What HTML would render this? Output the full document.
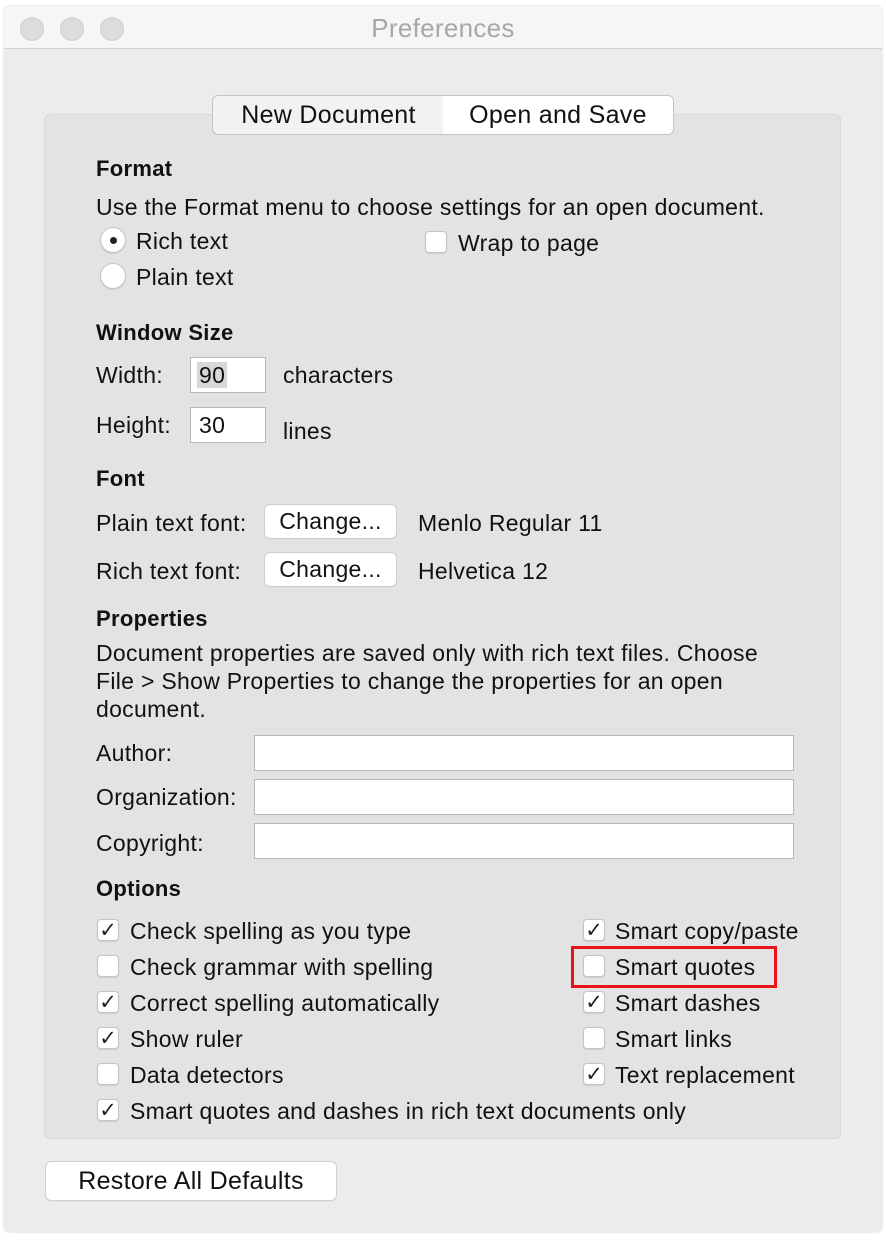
<!DOCTYPE html>
<html><head><meta charset="utf-8"><style>
*{box-sizing:border-box;margin:0;padding:0}
body{width:886px;height:1240px;background:#fff;font-family:"Liberation Sans",sans-serif;font-size:23px;letter-spacing:0.3px;color:#111;position:relative;overflow:hidden}
.win{position:absolute;left:4px;top:6px;width:878px;height:1226px;background:#ececec;border-radius:6px;box-shadow:0 0 2px #ccc}
.tb{position:absolute;left:4px;top:6px;width:878px;height:43px;background:#f6f6f6;border-bottom:1px solid #d2d2d2;border-radius:6px 6px 0 0}
.dot{position:absolute;top:17px;width:24px;height:24px;border-radius:50%;background:#dcdcdc;border:1px solid #d0d0d0}
.t{position:absolute;line-height:26px;white-space:nowrap}
.b{font-weight:bold;font-size:22px}
.panel{position:absolute;left:44px;top:114px;width:797px;height:1025px;background:#e3e3e3;border:1px solid #d8d8d8;border-radius:6px}
.tab{position:absolute;top:95px;height:40px;line-height:38px;font-size:25px;text-align:center;border:1px solid #c4c4c4}
.box{position:absolute;background:#fff;border:1px solid #b8b8b8}
.btn{position:absolute;background:#fff;border-radius:5px;box-shadow:0 0 0 1px #cfcfcf,0 1px 1px #b8b8b8;text-align:center}
.cb{position:absolute;width:22px;height:22px;background:#fff;border:1px solid #c4c4c4;border-radius:4px;box-shadow:0 1px 1px #ccc;font-size:21px;line-height:21px;text-align:center;color:#222;letter-spacing:0}
.rd{position:absolute;width:26px;height:26px;border-radius:50%;background:#fff;border:1px solid #c4c4c4;box-shadow:0 1px 1px #ccc}
</style></head><body>
<div class="win"></div>
<div class="tb"></div>
<div class="dot" style="left:20px"></div>
<div class="dot" style="left:60px"></div>
<div class="dot" style="left:100px"></div>
<div class="t" style="left:0;width:886px;text-align:center;top:15px;font-size:26px;color:#a8a8a8">Preferences</div>

<div class="panel"></div>
<div class="tab" style="left:212px;width:232px;background:#f2f2f2;border-radius:6px 0 0 6px;border-right:none">New Document</div>
<div class="tab" style="left:443px;width:231px;background:#fff;border-radius:0 6px 6px 0;border-left:none">Open and Save</div>

<div class="t b" style="left:96px;top:156px">Format</div>
<div class="t" style="left:96px;top:194px">Use the Format menu to choose settings for an open document.</div>
<div class="rd" style="left:100px;top:227px"><div style="position:absolute;left:9px;top:9px;width:7px;height:7px;border-radius:50%;background:#222"></div></div>
<div class="t" style="left:136px;top:228px">Rich text</div>
<div class="rd" style="left:100px;top:263px"></div>
<div class="t" style="left:136px;top:264px">Plain text</div>
<div class="cb" style="left:425px;top:231px"></div>
<div class="t" style="left:458px;top:230px">Wrap to page</div>

<div class="t b" style="left:96px;top:320px">Window Size</div>
<div class="t" style="left:96px;top:362px">Width:</div>
<div class="box" style="left:190px;top:357px;width:76px;height:36px"><span style="position:absolute;left:6px;top:4px;background:#d8d8d8;line-height:26px;padding:0 2px">90</span></div>
<div class="t" style="left:283px;top:362px">characters</div>
<div class="t" style="left:96px;top:412px">Height:</div>
<div class="box" style="left:190px;top:407px;width:76px;height:36px"><span style="position:absolute;left:8px;top:4px;line-height:26px">30</span></div>
<div class="t" style="left:283px;top:418px">lines</div>

<div class="t b" style="left:96px;top:466px">Font</div>
<div class="t" style="left:96px;top:510px">Plain text font:</div>
<div class="btn" style="left:265px;top:505px;width:131px;height:33px;line-height:33px">Change...</div>
<div class="t" style="left:418px;top:510px">Menlo Regular 11</div>
<div class="t" style="left:96px;top:558px">Rich text font:</div>
<div class="btn" style="left:265px;top:553px;width:131px;height:33px;line-height:33px">Change...</div>
<div class="t" style="left:418px;top:558px">Helvetica 12</div>

<div class="t b" style="left:96px;top:606px">Properties</div>
<div class="t" style="left:96px;top:640px">Document properties are saved only with rich text files. Choose</div>
<div class="t" style="left:96px;top:668px">File &gt; Show Properties to change the properties for an open</div>
<div class="t" style="left:96px;top:696px">document.</div>
<div class="t" style="left:96px;top:740px">Author:</div>
<div class="box" style="left:254px;top:735px;width:540px;height:36px"></div>
<div class="t" style="left:96px;top:784px">Organization:</div>
<div class="box" style="left:254px;top:779px;width:540px;height:36px"></div>
<div class="t" style="left:96px;top:830px">Copyright:</div>
<div class="box" style="left:254px;top:823px;width:540px;height:36px"></div>

<div class="t b" style="left:96px;top:876px">Options</div>
<div class="cb" style="left:97px;top:919px">✓</div><div class="t" style="left:130px;top:918px">Check spelling as you type</div>
<div class="cb" style="left:97px;top:955px"></div><div class="t" style="left:130px;top:954px">Check grammar with spelling</div>
<div class="cb" style="left:97px;top:991px">✓</div><div class="t" style="left:130px;top:990px">Correct spelling automatically</div>
<div class="cb" style="left:97px;top:1027px">✓</div><div class="t" style="left:130px;top:1026px">Show ruler</div>
<div class="cb" style="left:97px;top:1063px"></div><div class="t" style="left:130px;top:1062px">Data detectors</div>
<div class="cb" style="left:97px;top:1099px">✓</div><div class="t" style="left:130px;top:1098px">Smart quotes and dashes in rich text documents only</div>

<div class="cb" style="left:583px;top:919px">✓</div><div class="t" style="left:615px;top:918px">Smart copy/paste</div>
<div class="cb" style="left:583px;top:955px"></div><div class="t" style="left:615px;top:954px">Smart quotes</div>
<div class="cb" style="left:583px;top:991px">✓</div><div class="t" style="left:615px;top:990px">Smart dashes</div>
<div class="cb" style="left:583px;top:1027px"></div><div class="t" style="left:615px;top:1026px">Smart links</div>
<div class="cb" style="left:583px;top:1063px">✓</div><div class="t" style="left:615px;top:1062px">Text replacement</div>
<div style="position:absolute;left:571px;top:946px;width:206px;height:42px;border:3px solid #e8141a"></div>

<div class="btn" style="left:46px;top:1162px;width:290px;height:38px;line-height:38px;font-size:25px">Restore All Defaults</div>
</body></html>
